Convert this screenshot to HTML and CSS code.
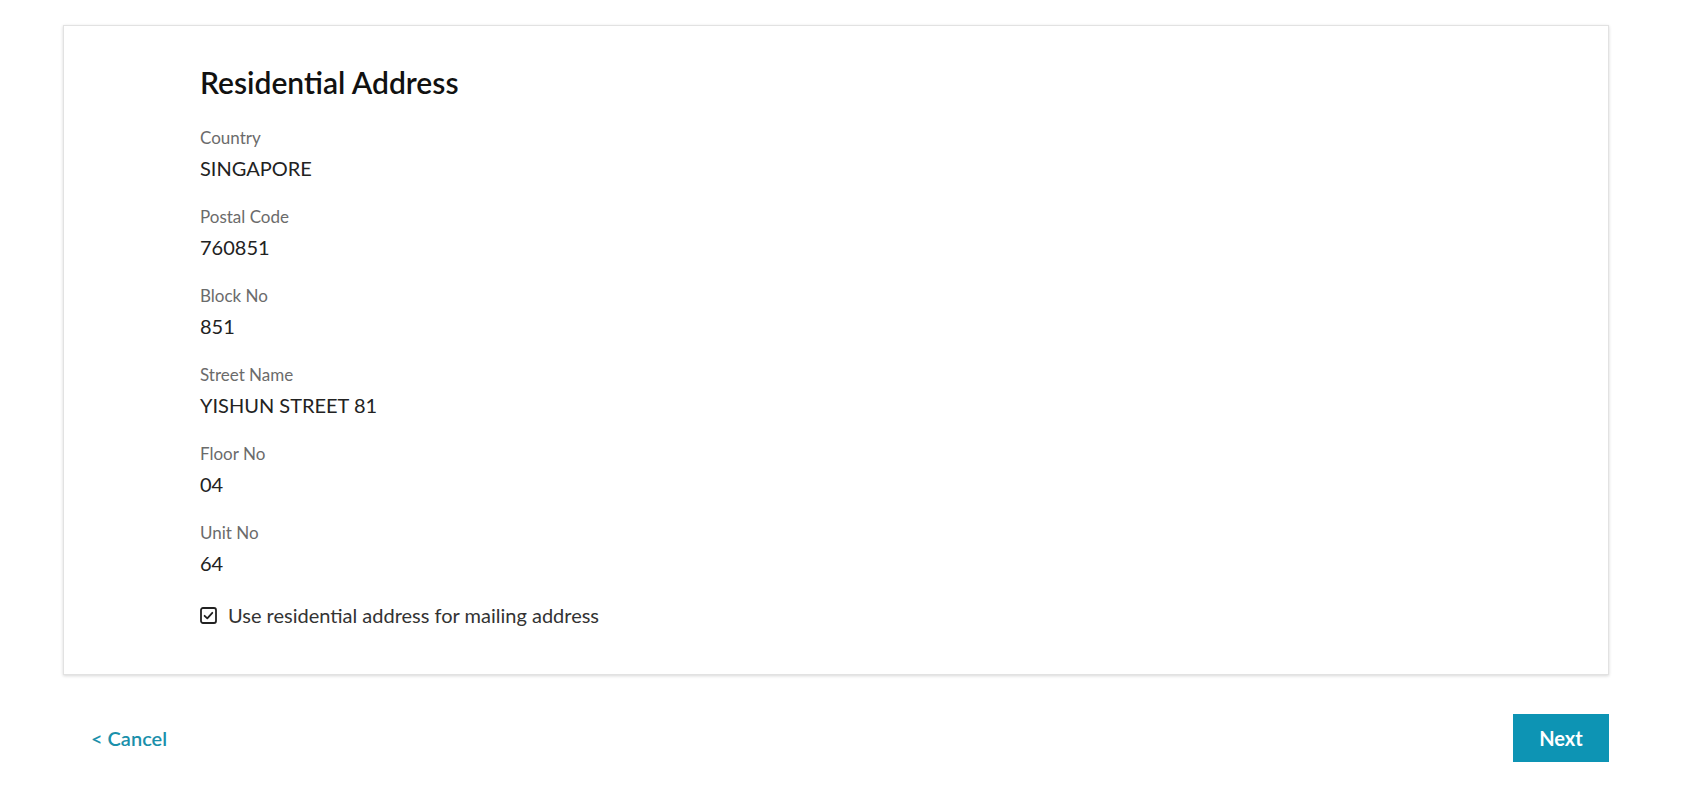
FILE: index.html
```html
<!DOCTYPE html>
<html lang="en">

<head>
  <meta charset="UTF-8">
  <title>Residential Address</title>
  <link rel="stylesheet" href="styles.css">
</head>

<body>
  <div class="page">
    <section class="card">
      <h1 class="card-title">Residential Address</h1>

      <div class="field">
        <div class="field-label">Country</div>
        <div class="field-value">SINGAPORE</div>
      </div>
      <div class="field">
        <div class="field-label">Postal Code</div>
        <div class="field-value">760851</div>
      </div>
      <div class="field">
        <div class="field-label">Block No</div>
        <div class="field-value">851</div>
      </div>
      <div class="field">
        <div class="field-label">Street Name</div>
        <div class="field-value">YISHUN STREET 81</div>
      </div>
      <div class="field">
        <div class="field-label">Floor No</div>
        <div class="field-value">04</div>
      </div>
      <div class="field">
        <div class="field-label">Unit No</div>
        <div class="field-value">64</div>
      </div>

      <label class="check-row">
        <svg class="check-box" width="17" height="17" viewBox="0 0 17 17">
          <rect x="1" y="1" width="15" height="15" rx="2" fill="none" stroke="#222" stroke-width="1.8"/>
          <path d="M4.6 8.8 L7.3 11.4 L12.3 5.8" fill="none" stroke="#222" stroke-width="1.8" stroke-linecap="round" stroke-linejoin="round"/>
        </svg>
        <span>Use residential address for mailing address</span>
      </label>
    </section>

    <div class="actions">
      <a class="cancel-link" href="#">&lt; Cancel</a>
      <button class="next-button" type="button">Next</button>
    </div>
  </div>
</body>

</html>
```

FILE: styles.css
```css
body {
  margin: 0;
  background-color: #fff;
  font-family: Lato, "Open Sans", sans-serif;
  color: #222;
}

.page {
  width: 1546px;
  margin: 25px 0 0 63px;
}

.card {
  border: 1px solid #e2e2e2;
  box-shadow: 0 1px 3px rgba(0, 0, 0, 0.16);
  padding: 38px 136px 46px;
}

.card-title {
  margin: 0 0 25px;
  font-size: 30px;
  font-weight: 600;
  line-height: 36px;
  color: #111;
}

.field {
  margin-bottom: 23px;
}

.field-label {
  font-size: 17px;
  line-height: 26px;
  color: #6b6b6b;
}

.field-value {
  margin-top: 4px;
  font-size: 20px;
  line-height: 26px;
  color: #222;
}

.check-row {
  display: flex;
  align-items: center;
  gap: 11px;
  padding-top: 3px;
  font-size: 20px;
  line-height: 26px;
  color: #333;
}

.actions {
  display: flex;
  justify-content: space-between;
  align-items: center;
  margin-top: 39px;
  padding-left: 28px;
}

.cancel-link {
  color: #1a90ab;
  text-decoration: none;
  font-size: 20px;
  font-weight: 600;
}

.next-button {
  width: 96px;
  height: 48px;
  border: none;
  background-color: #0d94b4;
  color: #fff;
  font-family: inherit;
  font-size: 20px;
  font-weight: 700;
  cursor: pointer;
}
```
